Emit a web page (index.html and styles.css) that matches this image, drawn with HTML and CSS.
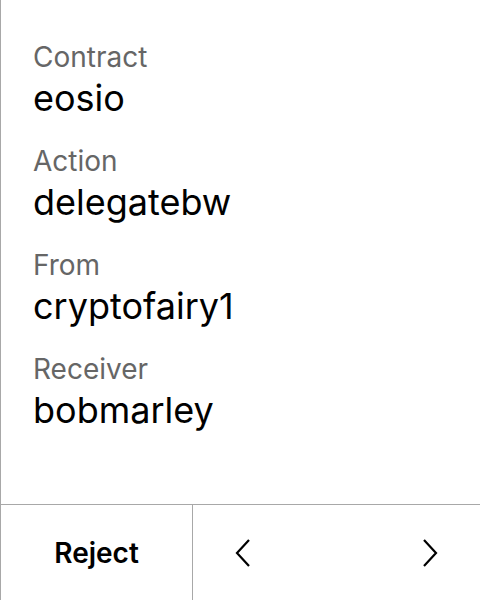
FILE: index.html
```html
<!DOCTYPE html>
<html>
<head>
<meta charset="utf-8">
<link rel="stylesheet" href="styles.css">
</head>
<body>
<div class="screen">
  <div class="content">
    <div class="field">
      <div class="label">Contract</div>
      <div class="value">eosio</div>
    </div>
    <div class="field">
      <div class="label">Action</div>
      <div class="value">delegatebw</div>
    </div>
    <div class="field">
      <div class="label">From</div>
      <div class="value">cryptofairy1</div>
    </div>
    <div class="field">
      <div class="label">Receiver</div>
      <div class="value">bobmarley</div>
    </div>
  </div>
  <div class="footer">
    <div class="reject">Reject</div>
    <div class="nav">
      <svg class="chev" width="16" height="30" viewBox="0 0 16 30"><path d="M14 2 L2 15 L14 28" fill="none" stroke="#000" stroke-width="2.2"/></svg>
      <svg class="chev" width="16" height="30" viewBox="0 0 16 30"><path d="M2 2 L14 15 L2 28" fill="none" stroke="#000" stroke-width="2.2"/></svg>
    </div>
  </div>
</div>
</body>
</html>
```
FILE: styles.css
```css
html, body {
  margin: 0;
  padding: 0;
  background: #fff;
}
.screen {
  width: 480px;
  height: 600px;
  box-sizing: border-box;
  border-left: 1px solid #a8a8a8;
  display: flex;
  flex-direction: column;
  font-family: Inter, "Liberation Sans", sans-serif;
}
.content {
  flex: 1;
  padding: 41px 0 0 32px;
  display: flex;
  flex-direction: column;
  gap: 22px;
}
.field {
  display: flex;
  flex-direction: column;
}
.label {
  font-size: 28px;
  line-height: 32px;
  color: #666;
}
.value {
  font-size: 36px;
  line-height: 50px;
  color: #000;
  font-weight: 400;
}
.footer {
  height: 96px;
  box-sizing: border-box;
  border-top: 1px solid #a8a8a8;
  display: flex;
}
.reject {
  width: 191px;
  border-right: 1px solid #a8a8a8;
  display: flex;
  align-items: center;
  justify-content: center;
  font-size: 28px;
  font-weight: 600;
  color: #000;
}
.nav {
  flex: 1;
  display: flex;
  align-items: center;
  justify-content: space-between;
  padding: 0 42px;
}
```
